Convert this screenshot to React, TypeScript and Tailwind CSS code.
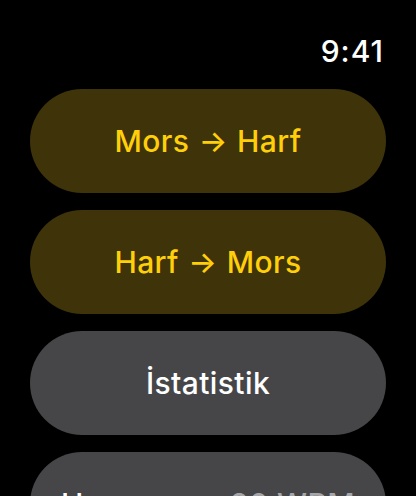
import React from 'react';

const font = { fontFamily: 'Inter, "Noto Sans", sans-serif' };

function PillButton({
  children,
  tone,
}: {
  children: React.ReactNode;
  tone: 'yellow' | 'gray';
}) {
  const cls =
    tone === 'yellow'
      ? 'bg-[#3e3309] text-[#ffd00a]'
      : 'bg-[#464648] text-white';
  return (
    <button
      className={`h-[104px] w-full shrink-0 rounded-[52px] ${cls} flex items-center justify-center text-[30px] font-medium leading-none tracking-[0.4px]`}
    >
      {children}
    </button>
  );
}

function Arrow() {
  return <span className="mx-[1px]">→</span>;
}

export default function App() {
  return (
    <div className="h-[496px] w-[416px] overflow-hidden bg-black" style={font}>
      <div className="flex justify-end pr-[32px] pt-[33px]">
        <span className="text-[30px] font-medium leading-[36px] tracking-[1px] text-white">9:41</span>
      </div>
      <div className="mt-[20px] flex flex-col gap-[17px] px-[30px]">
        <PillButton tone="yellow">
          <span className="whitespace-pre">Mors <Arrow /> Harf</span>
        </PillButton>
        <PillButton tone="yellow">
          <span className="whitespace-pre">Harf <Arrow /> Mors</span>
        </PillButton>
        <PillButton tone="gray">İstatistik</PillButton>
        <div className="flex h-[104px] w-full shrink-0 items-center justify-between rounded-[52px] bg-[#464648] px-[31px] text-[30px] font-medium leading-none tracking-[0.4px]">
          <span className="text-white">Hız</span>
          <span className="text-[#a5a5aa]">20 WPM</span>
        </div>
      </div>
    </div>
  );
}
